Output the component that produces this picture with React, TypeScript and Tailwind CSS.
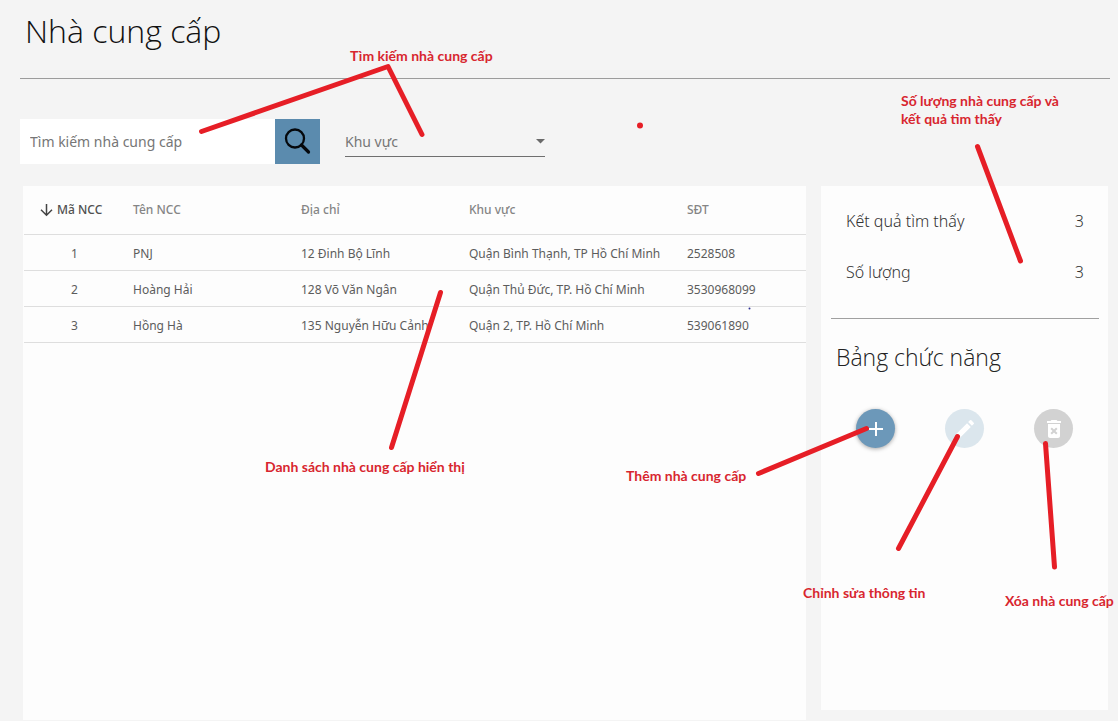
import React from 'react';

type Supplier = { id: number; name: string; address: string; area: string; phone: string };

const suppliers: Supplier[] = [
  { id: 1, name: 'PNJ', address: '12 Đinh Bộ Lĩnh', area: 'Quận Bình Thạnh, TP Hồ Chí Minh', phone: '2528508' },
  { id: 2, name: 'Hoàng Hải', address: '128 Võ Văn Ngân', area: 'Quận Thủ Đức, TP. Hồ Chí Minh', phone: '3530968099' },
  { id: 3, name: 'Hồng Hà', address: '135 Nguyễn Hữu Cảnh', area: 'Quận 2, TP. Hồ Chí Minh', phone: '539061890' },
];

function SearchBar() {
  return (
    <div className="flex h-[45px] items-stretch">
      <input
        type="text"
        aria-label="Tìm kiếm nhà cung cấp"
        placeholder="Tìm kiếm nhà cung cấp"
        className="w-[255px] bg-white px-2.5 text-[14px] text-[#555] outline-none placeholder:text-[#767676]"
      />
      <button type="button" aria-label="Tìm" className="flex w-[45px] items-center justify-center bg-[#5b8bae]">
        <svg width="28" height="28" viewBox="0 0 28 28" fill="none" stroke="#05080c">
          <circle cx="11" cy="10.500" r="9" strokeWidth="2.300" />
          <path d="M17.500 17L24.500 24" strokeWidth="3.200" strokeLinecap="round" />
        </svg>
      </button>
      <div className="relative mb-[7px] ml-[25px] w-[200px] border-b border-[#6f6f6f]">
        <select
          aria-label="Khu vực"
          className="h-full w-full appearance-none bg-transparent pt-2 text-[14px] text-[#767676] outline-none"
        >
          <option>Khu vực</option>
        </select>
        <svg className="pointer-events-none absolute right-0 top-5" width="9" height="5" viewBox="0 0 9 5" fill="#6a6a6a">
          <path d="M0 0h9L4.500 4.600z" />
        </svg>
      </div>
    </div>
  );
}

function SupplierTable() {
  return (
    <section className="min-w-0 flex-1 bg-[#fdfdfd] pl-px">
      <table className="w-full table-fixed border-collapse text-left text-[12px] leading-5 text-[#5c5c5c]">
        <colgroup>
          <col className="w-[101px]" />
          <col className="w-[168px]" />
          <col className="w-[168px]" />
          <col className="w-[218px]" />
          <col />
        </colgroup>
        <thead>
          <tr className="h-12 border-b border-[#dedede] text-[#858585]">
            <th className="pl-4 font-medium text-[#505050]">
              <span className="flex items-center gap-1 whitespace-nowrap">
                <svg width="13" height="14" viewBox="0 0 13 14" fill="none" stroke="#444" strokeWidth="1.500">
                  <path d="M6.500 1v11M1 6.800l5.500 5.500 5.500-5.500" />
                </svg>
                Mã NCC
              </span>
            </th>
            <th className="px-2 font-medium">Tên NCC</th>
            <th className="px-2 font-medium">Địa chỉ</th>
            <th className="px-2 font-medium">Khu vực</th>
            <th className="px-2 font-medium">SĐT</th>
          </tr>
        </thead>
        <tbody>
          {suppliers.map((s) => (
            <tr key={s.id} className="h-9 whitespace-nowrap border-b border-[#dedede]">
              <td className="pt-1 text-center">{s.id}</td>
              <td className="px-2 pt-1">{s.name}</td>
              <td className="px-2 pt-1">{s.address}</td>
              <td className="px-2 pt-1">{s.area}</td>
              <td className="px-2 pt-1">{s.phone}</td>
            </tr>
          ))}
        </tbody>
      </table>
    </section>
  );
}

function SidePanel() {
  return (
    <aside className="mb-2.5 w-[287px] bg-[#fdfdfd] pl-2.5 pr-[9px]">
      <dl className="flex flex-col gap-[27px] border-b border-[#a0a0a0] pb-[34px] pl-[15px] pr-[15px] pt-[23px] text-[16px] font-light leading-6 text-[#333]">
        <div className="flex justify-between">
          <dt>Kết quả tìm thấy</dt>
          <dd>3</dd>
        </div>
        <div className="flex justify-between">
          <dt>Số lượng</dt>
          <dd>3</dd>
        </div>
      </dl>
      <h2 className="mt-5 pl-[5px] font-['Open_Sans',sans-serif] text-[23px] font-light leading-9 text-[#222]">Bảng chức năng</h2>
      <div className="mt-[34px] flex justify-between pl-[25px] pr-[26px]">
        <button
          type="button"
          aria-label="Thêm"
          className="flex size-[39px] items-center justify-center rounded-full bg-[#6c98b9] shadow-[0_1px_4px_rgba(0,0,0,0.35)]"
        >
          <svg width="14" height="14" viewBox="0 0 14 14" fill="#fff">
            <path d="M6 0h2v6h6v2H8v6H6V8H0V6h6z" />
          </svg>
        </button>
        <button type="button" aria-label="Sửa" className="flex size-[39px] items-center justify-center rounded-full bg-[#dbe6ed]">
          <svg width="24" height="24" viewBox="0 0 24 24" fill="#fff">
            <path d="M3 17.250V21h3.750L17.810 9.940l-3.750-3.750L3 17.250zM20.710 7.040a1 1 0 0 0 0-1.410l-2.340-2.340a1 1 0 0 0-1.410 0l-1.830 1.830 3.750 3.750 1.830-1.830z" />
          </svg>
        </button>
        <button type="button" aria-label="Xóa" className="flex size-[39px] items-center justify-center rounded-full bg-[#d2d2d2]">
          <svg width="24" height="24" viewBox="0 0 24 24" fill="#fff">
            <path d="M6 19c0 1.100.9 2 2 2h8c1.100 0 2-.9 2-2V7H6v12zm2.460-7.120l1.410-1.410L12 12.590l2.120-2.120 1.410 1.410L13.410 14l2.120 2.120-1.410 1.410L12 15.410l-2.120 2.120-1.410-1.410L10.590 14l-2.130-2.120zM15.500 4l-1-1h-5l-1 1H5v2h14V4z" />
          </svg>
        </button>
      </div>
    </aside>
  );
}

function Annotations() {
  return (
    <div className="pointer-events-none absolute inset-0 overflow-hidden font-[Lato,sans-serif] text-[14px] font-bold leading-[18px] text-[#d8262f]">
      <svg className="absolute left-0 top-0" width="1118" height="721" viewBox="0 0 1118 721" fill="none" stroke="#e61e26" strokeWidth="5" strokeLinecap="round" strokeLinejoin="round">
        <path d="M201.500 131.500L388 66.500L422 134.500" />
        <path d="M977.500 146.500L1020.500 261" />
        <path d="M440.500 292.500L391.500 447.500" />
        <path d="M866.500 428.500L758.500 473.500" />
        <path d="M957.500 436.500L898.500 548.500" />
        <path d="M1045.500 443.500L1054.500 567" />
        <circle cx="640" cy="125.500" r="3" fill="#e61e26" stroke="none" />
        <circle cx="749.500" cy="308.500" r="1" fill="#2f3192" stroke="none" />
      </svg>
      <p className="absolute left-[350px] top-[47px] whitespace-nowrap">Tìm kiếm nhà cung cấp</p>
      <p className="absolute left-[901px] top-[92px] whitespace-nowrap">
        Số lượng nhà cung cấp và
        <br />
        kết quả tìm thấy
      </p>
      <p className="absolute left-[265px] top-[458px] whitespace-nowrap">Danh sách nhà cung cấp hiển thị</p>
      <p className="absolute left-[626px] top-[467px] whitespace-nowrap">Thêm nhà cung cấp</p>
      <p className="absolute left-[803px] top-[584px] whitespace-nowrap">Chỉnh sửa thông tin</p>
      <p className="absolute left-[1005px] top-[592px] whitespace-nowrap">Xóa nhà cung cấp</p>
    </div>
  );
}

export default function App() {
  return (
    <div className="relative flex min-h-screen flex-col bg-[#f4f4f4] pb-px pl-5 pr-2 font-['Noto_Sans',sans-serif]">
      <header className="border-b border-[#9c9c9c] pb-6 pl-[5px] pt-2">
        <h1 className="font-['Open_Sans',sans-serif] text-[32px] font-light leading-[46px] text-[#111]">Nhà cung cấp</h1>
      </header>
      <div className="mt-10">
        <SearchBar />
      </div>
      <main className="mr-0.5 mt-[22px] flex flex-1 gap-[15px] pl-[3px]">
        <SupplierTable />
        <SidePanel />
      </main>
      <Annotations />
    </div>
  );
}
